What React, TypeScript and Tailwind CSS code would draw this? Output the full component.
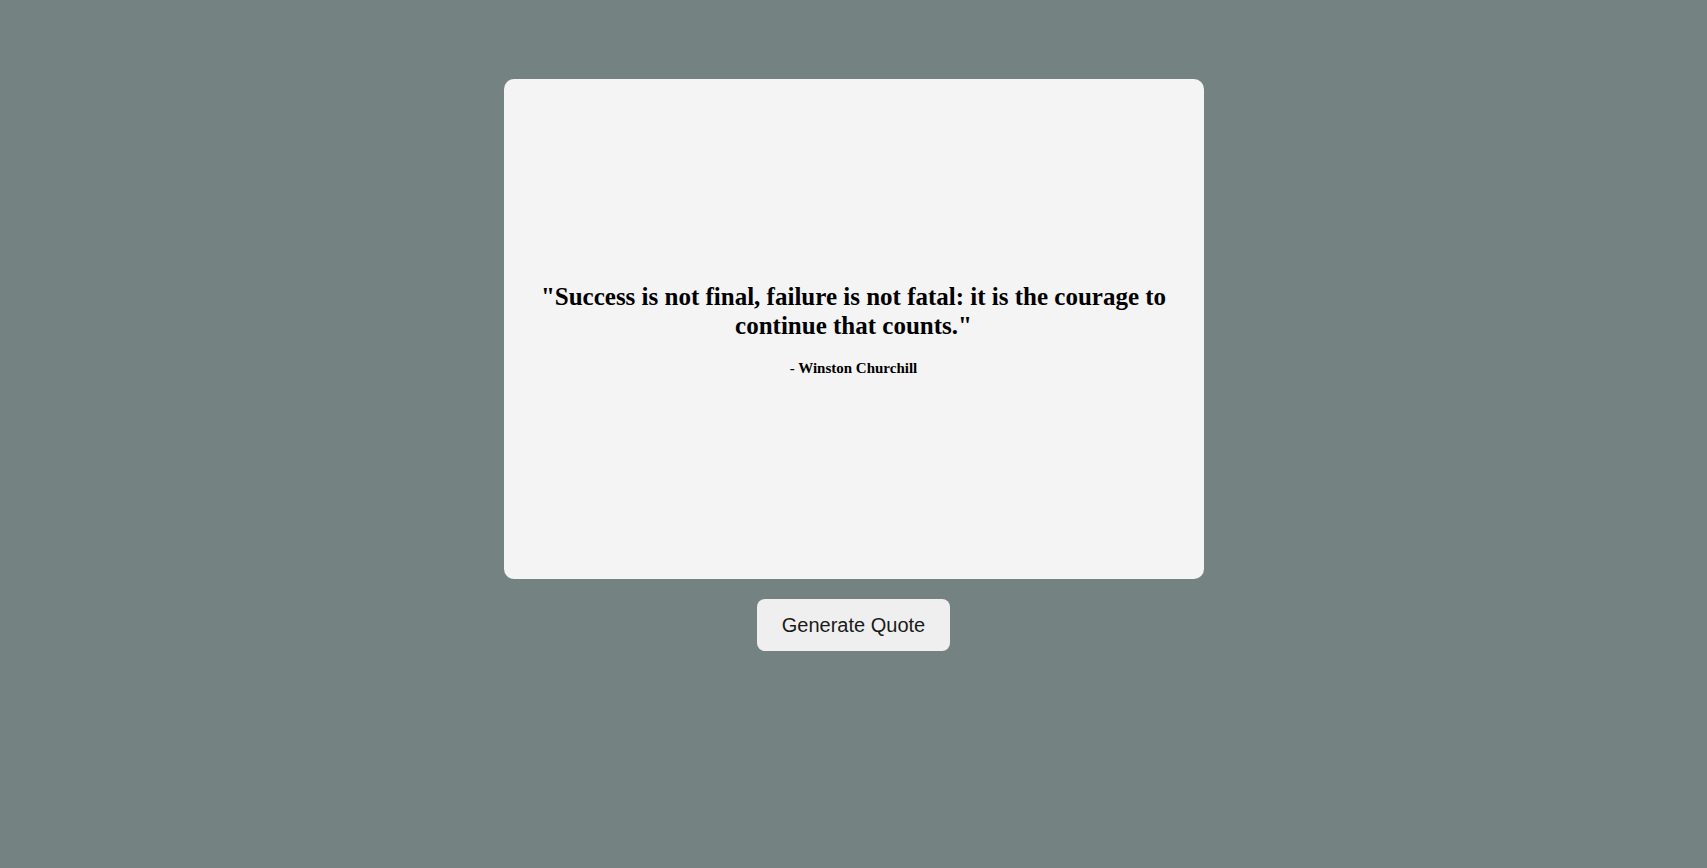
import React from "react";

export default function App() {
  return (
    <div className="min-h-[868px] w-full bg-[#748282] flex flex-col items-center pt-[79px]">
      <div className="w-[700px] h-[500px] bg-[#f4f4f4] rounded-[10px] flex flex-col items-center justify-center px-[20px] pt-[3px] text-center text-black font-['Liberation_Serif',serif]">
        <h2 className="text-[25px] font-bold leading-[29px]">
          "Success is not final, failure is not fatal: it is the courage to continue that counts."
        </h2>
        <p className="text-[15px] font-bold mt-[17px]">- Winston Churchill</p>
      </div>
      <button className="mt-[20px] h-[52px] px-[25px] bg-[#efefef] rounded-[8px] text-[20px] text-[#1a1a1a] font-['Liberation_Sans',Arial,sans-serif]">
        Generate Quote
      </button>
    </div>
  );
}
